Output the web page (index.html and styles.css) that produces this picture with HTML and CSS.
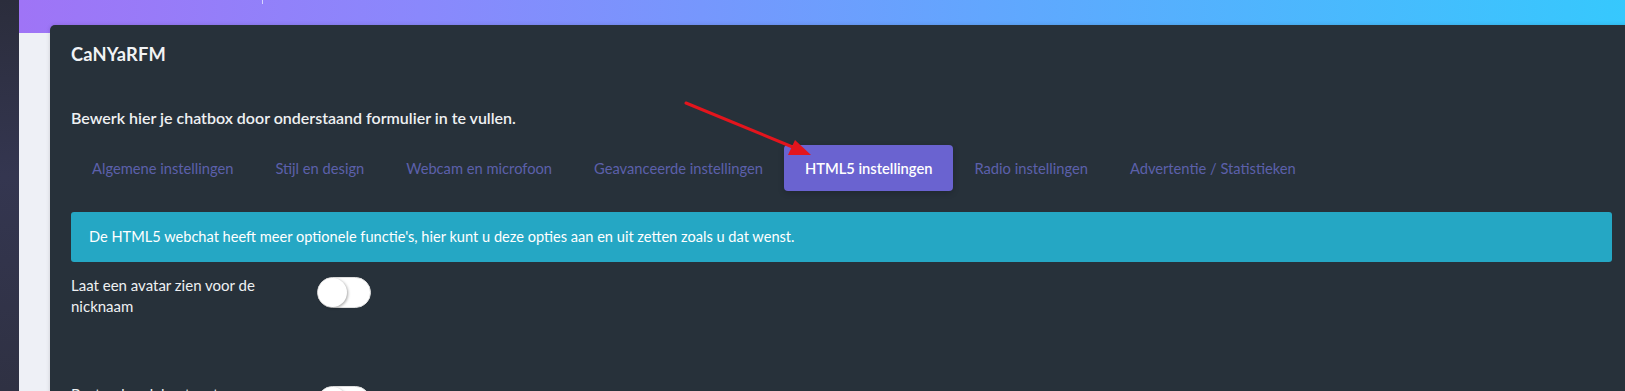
FILE: index.html
```html
<!DOCTYPE html>
<html lang="nl">
<head>
<meta charset="utf-8">
<title>CaNYaRFM</title>
<link rel="stylesheet" href="styles.css">
</head>
<body>
<div class="layout">
  <aside class="sidebar"></aside>
  <main class="main">
    <div class="hero"><span class="hero-tick"></span></div>
    <div class="content">
      <section class="card">
        <h2 class="card-title">CaNYaRFM</h2>
        <p class="lead">Bewerk hier je chatbox door onderstaand formulier in te vullen.</p>
        <nav class="tabs">
          <a class="tab">Algemene instellingen</a>
          <a class="tab">Stijl en design</a>
          <a class="tab">Webcam en microfoon</a>
          <a class="tab">Geavanceerde instellingen</a>
          <a class="tab active">HTML5 instellingen</a>
          <a class="tab">Radio instellingen</a>
          <a class="tab">Advertentie / Statistieken</a>
        </nav>
        <div class="alert">De HTML5 webchat heeft meer optionele functie's, hier kunt u deze opties aan en uit zetten zoals u dat wenst.</div>
        <div class="form-row">
          <label class="form-label">Laat een avatar zien voor de nicknaam</label>
          <span class="switch"><span class="knob"></span></span>
        </div>
        <div class="form-row">
          <label class="form-label">Bestanden delen toestaan</label>
          <span class="switch"><span class="knob"></span></span>
        </div>
      </section>
    </div>
  </main>
</div>
<svg class="annotation" width="1625" height="391" viewBox="0 0 1625 391">
  <line x1="686" y1="103" x2="795" y2="148" stroke="#e3151d" stroke-width="3" stroke-linecap="round"/>
  <polygon points="811,155 788,155 795,140" fill="#e3151d"/>
</svg>
</body>
</html>
```
FILE: styles.css
```css
* { box-sizing: border-box; }
html, body {
  margin: 0;
  padding: 0;
  width: 1625px;
  height: 391px;
  overflow: hidden;
  font-family: "Lato", "Noto Sans", sans-serif;
}
.layout {
  display: flex;
  width: 1625px;
  height: 391px;
}
.sidebar {
  width: 19px;
  flex: none;
  background: linear-gradient(180deg, #2b2d3c 0%, #343650 45%, #2f3143 100%);
}
.main {
  flex: 1;
  display: flex;
  flex-direction: column;
  background: #eef0f6;
  overflow: hidden;
}
.hero {
  height: 33px;
  flex: none;
  background: linear-gradient(90deg, #9f74f6 0%, #8a88fc 25%, #62a6fe 60%, #36c8fd 100%);
  display: flex;
}
.hero-tick {
  margin-left: 243px;
  width: 1px;
  height: 4px;
  background: #d6d3ff;
}
.content {
  flex: 1;
  padding-left: 31px;
  margin-top: -8px;
  margin-right: -30px;
}
.card {
  background: #27313a;
  border-radius: 5px 0 0 0;
  padding: 0 21px;
  height: 100%;
  box-shadow: 0 0 4px rgba(0,0,0,0.15);
}
.card-title {
  margin: 0;
  padding-top: 18px;
  font-size: 18.3px;
  line-height: 22px;
  font-weight: 700;
  color: #f1f3f5;
  letter-spacing: 0.2px;
}
.lead {
  margin: 42px 0 0;
  font-size: 16px;
  line-height: 22px;
  font-weight: 600;
  color: #eef0f2;
}
.tabs {
  display: flex;
  margin-top: 16px;
}
.tab {
  display: block;
  padding: 12px 21px;
  font-size: 14.7px;
  line-height: 22px;
  color: #5c60aa;
  border-radius: 4px;
}
.tab.active {
  background: #6a63d0;
  color: #ffffff;
  font-weight: 600;
  box-shadow: 0 2px 6px rgba(0,0,0,0.2);
}
.alert {
  margin-top: 21px;
  width: 1541px;
  padding: 14px 18px;
  background: #25a7c4;
  border-radius: 3px;
  color: #ffffff;
  font-size: 14.6px;
  line-height: 22px;
}
.form-row {
  display: flex;
  align-items: flex-start;
  gap: 26px;
  margin-top: 13px;
  margin-bottom: 67px;
}
.form-label {
  width: 220px;
  font-size: 15px;
  line-height: 21px;
  color: #eef0f2;
}
.switch {
  position: relative;
  margin-top: 2px;
  width: 54px;
  height: 31px;
  border-radius: 16px;
  background: #ffffff;
  border: 1px solid #dfdfdf;
  flex: none;
}
.knob {
  position: absolute;
  left: 0;
  top: 0;
  width: 29px;
  height: 29px;
  border-radius: 50%;
  background: #ffffff;
  box-shadow: 1px 1px 3px rgba(0,0,0,0.35);
}
.annotation {
  position: absolute;
  left: 0;
  top: 0;
  pointer-events: none;
}
```
